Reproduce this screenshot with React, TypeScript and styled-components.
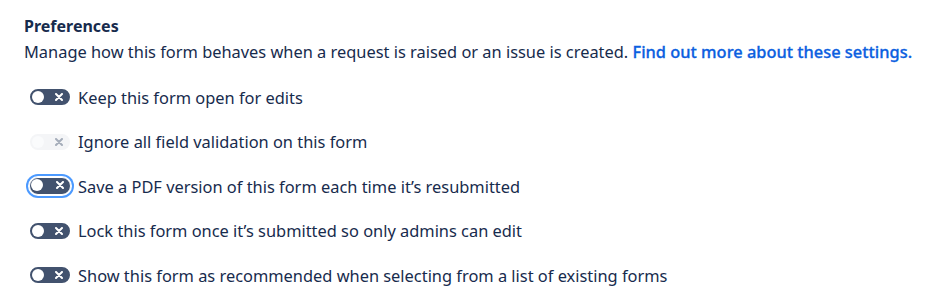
import React from 'react';
import styled, { createGlobalStyle, css } from 'styled-components';

const GlobalStyle = createGlobalStyle`
  body {
    margin: 0;
    background: #ffffff;
    font-family: "Noto Sans", "Open Sans", sans-serif;
    color: #172b4d;
  }
`;

const Page = styled.div`
  padding: 16px 24px 0 24px;
`;

const Title = styled.h3`
  margin: 0;
  font-size: 16px;
  font-weight: 700;
  line-height: 20px;
  color: #172b4d;
`;

const Description = styled.p`
  margin: 4px 0 0 0;
  font-size: 16.4px;
  line-height: 24px;
  color: #172b4d;
`;

const Link = styled.a`
  color: #0c5fe0;
  font-weight: 500;
  -webkit-text-stroke: 0.3px #0c5fe0;
  text-decoration: none;
`;

const List = styled.div`
  display: flex;
  flex-direction: column;
  gap: 20.5px;
  margin-top: 21px;
`;

const Row = styled.label`
  display: flex;
  align-items: center;
  gap: 6px;
  height: 24px;
  padding-left: 4px;
  font-size: 16.4px;
  color: #172b4d;
`;

const Track = styled.span<{ $disabled?: boolean; $focused?: boolean }>`
  position: relative;
  box-sizing: border-box;
  flex: 0 0 auto;
  width: 44px;
  height: 20px;
  border-radius: 10px;
  border: 2px solid #ffffff;
  background: ${({ $disabled }) => ($disabled ? '#f4f5f7' : '#42526e')};
  ${({ $focused }) =>
    $focused &&
    css`
      box-shadow: 0 0 0 1px #ffffff, 0 0 0 3px #4c9aff;
      border-width: 1px;
      width: 42px;
      height: 18px;
      margin: 0 1px;
    `}
`;

const Knob = styled.span<{ $disabled?: boolean; $focused?: boolean }>`
  position: absolute;
  top: ${({ $focused }) => ($focused ? '1px' : '2px')};
  left: ${({ $focused }) => ($focused ? '1px' : '2px')};
  width: 12px;
  height: 12px;
  border-radius: 50%;
  background: ${({ $disabled }) => ($disabled ? '#fafbfc' : '#ffffff')};
`;

const Cross = styled.svg<{ $focused?: boolean }>`
  position: absolute;
  top: ${({ $focused }) => ($focused ? '3px' : '4px')};
  right: ${({ $focused }) => ($focused ? '6px' : '7px')};
  width: 8px;
  height: 8px;
`;

interface Pref {
  label: string;
  disabled?: boolean;
  focused?: boolean;
}

const prefs: Pref[] = [
  { label: 'Keep this form open for edits' },
  { label: 'Ignore all field validation on this form', disabled: true },
  { label: 'Save a PDF version of this form each time it\u2019s resubmitted', focused: true },
  { label: 'Lock this form once it\u2019s submitted so only admins can edit' },
  { label: 'Show this form as recommended when selecting from a list of existing forms' },
];

const Toggle: React.FC<{ disabled?: boolean; focused?: boolean }> = ({ disabled, focused }) => (
  <Track $disabled={disabled} $focused={focused}>
    <Knob $disabled={disabled} $focused={focused} />
    <Cross $focused={focused} viewBox="0 0 8 8">
      <path
        d="M1 1 L7 7 M7 1 L1 7"
        stroke={disabled ? '#a5adba' : '#ffffff'}
        strokeWidth="2"
        strokeLinecap="round"
      />
    </Cross>
  </Track>
);

const App: React.FC = () => (
  <>
    <GlobalStyle />
    <Page>
      <Title>Preferences</Title>
      <Description>
        Manage how this form behaves when a request is raised or an issue is created.{' '}
        <Link href="#">Find out more about these settings.</Link>
      </Description>
      <List>
        {prefs.map((p) => (
          <Row key={p.label}>
            <Toggle disabled={p.disabled} focused={p.focused} />
            {p.label}
          </Row>
        ))}
      </List>
    </Page>
  </>
);

export default App;
